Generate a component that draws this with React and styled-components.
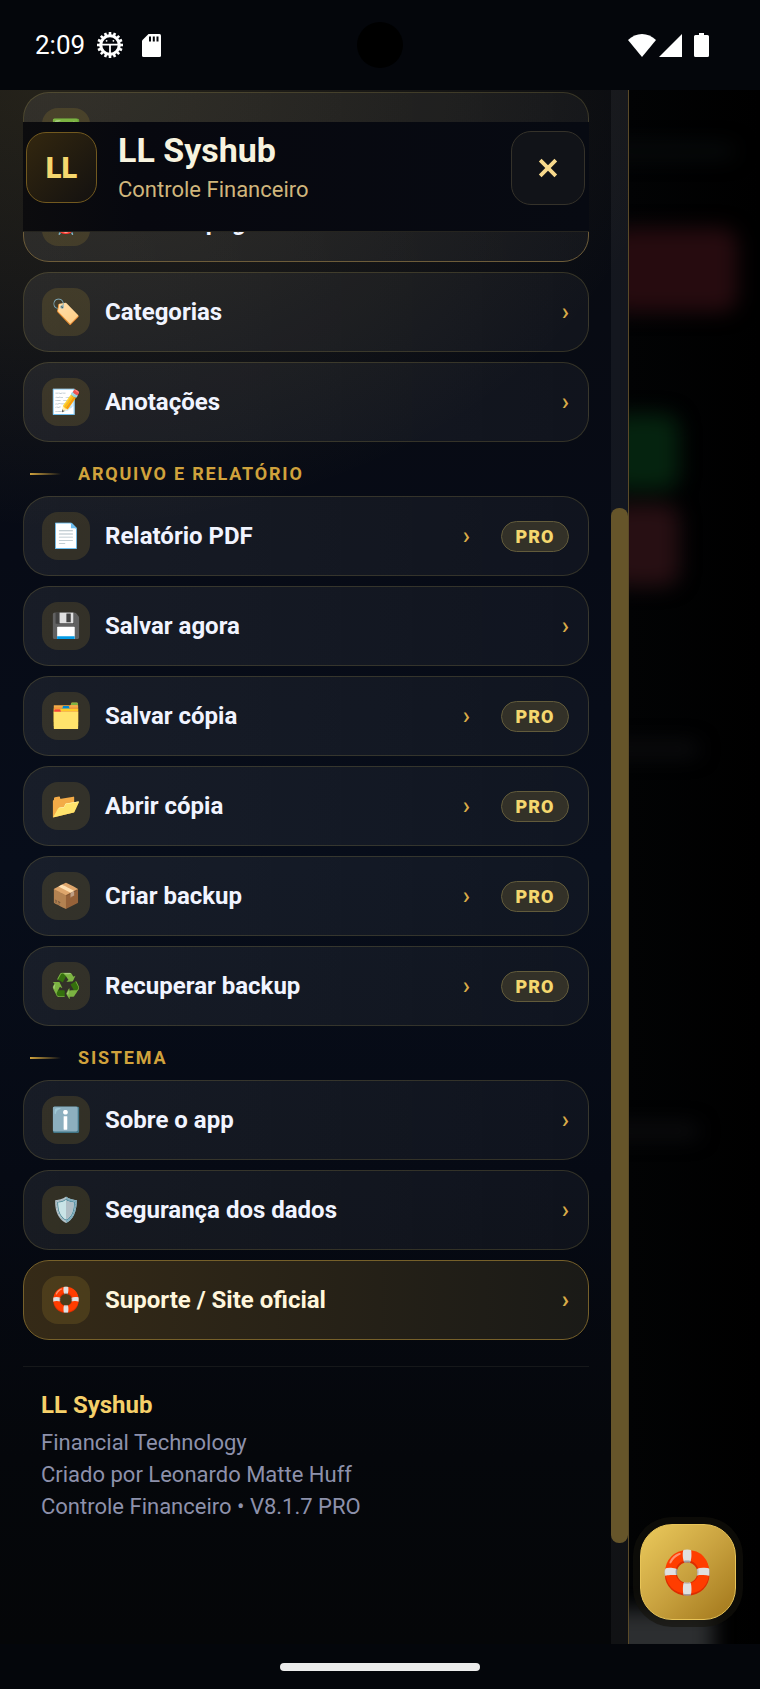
import React, { useState } from 'react';
import styled, { createGlobalStyle, css } from 'styled-components';

const GlobalStyle = createGlobalStyle`
  * {
    box-sizing: border-box;
  }
  body {
    margin: 0;
    background: #000;
    font-family: Roboto, 'Noto Color Emoji', sans-serif;
  }
  button {
    font-family: inherit;
    cursor: pointer;
  }
`;

const Page = styled.div`
  display: flex;
  flex-direction: column;
  min-height: 100vh;
  background: #000;
`;

const StatusBar = styled.header`
  position: relative;
  display: flex;
  align-items: center;
  justify-content: space-between;
  height: 90px;
  padding: 0 51px 0 35px;
  background: #04060b;
  color: #fff;
  font-size: 26px;
`;

const StatusGroup = styled.div`
  display: flex;
  align-items: center;
  gap: ${(props) => props.$gap}px;
  svg {
    display: block;
  }
`;

const Camera = styled.div`
  position: absolute;
  left: 50%;
  top: 50%;
  width: 46px;
  height: 46px;
  border-radius: 50%;
  background: #000;
  transform: translate(-50%, -50%);
`;

const Stage = styled.div`
  display: flex;
  flex: 1;
`;

const Drawer = styled.aside`
  position: relative;
  display: flex;
  flex: 0 0 629px;
  max-width: 100%;
  border-right: 1px solid #5a4a28;
  overflow: hidden;
  background: radial-gradient(
      ellipse 620px 460px at 60px -20px,
      rgba(212, 180, 90, 0.14),
      rgba(212, 180, 90, 0.08) 50%,
      transparent
    ),
    linear-gradient(180deg, #090b10 0%, #070b16 30%, #070d1a 50%, #060a14 70%, #05070b 88%, #050608 100%);
`;

const Content = styled.div`
  flex: 1;
  min-width: 0;
  padding: 2px 22px 0 23px;
`;

const Track = styled.div`
  width: 17px;
  padding-top: 418px;
  background: rgba(255, 255, 255, 0.05);
`;

const Thumb = styled.div`
  height: 1035px;
  border-radius: 8px;
  background: #66552a;
`;

const Brand = styled.div`
  position: absolute;
  z-index: 1;
  top: 32px;
  left: 23px;
  right: 39px;
  display: flex;
  align-items: flex-start;
  height: 110px;
  padding: 9px 4px 0 3px;
  border-bottom: 1px solid #25241f;
  background: linear-gradient(90deg, #0c0c0e, #07080f 20%, #070a12);
`;

const Logo = styled.div`
  display: flex;
  align-items: center;
  justify-content: center;
  width: 71px;
  height: 71px;
  margin-top: 1px;
  border: 1px solid #72591f;
  border-radius: 20px;
  background: linear-gradient(135deg, #33270f, #131110);
  color: #f5d76e;
  font-size: 29px;
  font-weight: 900;
`;

const BrandText = styled.div`
  flex: 1;
  padding-left: 21px;
`;

const BrandName = styled.h1`
  margin: 0;
  color: #f7f3df;
  font-size: 34px;
  font-weight: 700;
  line-height: 38px;
`;

const BrandSub = styled.div`
  margin-top: 7px;
  color: #d0b67c;
  font-size: 22px;
  line-height: 28px;
`;

const Close = styled.button`
  display: flex;
  align-items: center;
  justify-content: center;
  width: 74px;
  height: 74px;
  padding: 0;
  border: 1px solid #35322a;
  border-radius: 20px;
  background: #111318;
`;

const List = styled.nav`
  display: flex;
  flex-direction: column;
  gap: 10px;
`;

const featured = css`
  border-color: #76602a;
  background: linear-gradient(90deg, #352a17, #1a1a17);
  color: #fff6dc;
`;

const active = css`
  border-color: #6d5c39;
`;

const Item = styled.button`
  display: flex;
  align-items: center;
  width: 100%;
  height: 80px;
  padding: 0 19px 0 18px;
  border: 1px solid rgba(212, 190, 90, 0.18);
  border-radius: 26px;
  background: linear-gradient(90deg, rgba(255, 255, 255, 0.07), rgba(255, 255, 255, 0.04));
  color: #f1f4ff;
  font-size: 24px;
  font-weight: 700;
  text-align: left;
  ${(props) => props.$active && active}
  ${(props) => props.$featured && featured}
`;

const ItemIcon = styled.span`
  display: flex;
  align-items: center;
  justify-content: center;
  width: 48px;
  height: 48px;
  border-radius: 16px;
  background: rgba(212, 175, 55, 0.15);
  font-size: 24px;
  font-weight: 400;
`;

const ItemLabel = styled.span`
  flex: 1;
  padding-left: 15px;
`;

const Arrow = styled.span`
  color: #d9ab48;
  font-size: 24px;
  font-weight: ${(props) => (props.$bold ? 700 : 500)};
`;

const Badge = styled.span`
  display: flex;
  align-items: center;
  justify-content: center;
  width: 68px;
  height: 31px;
  margin-left: 31px;
  border: 1px solid #625b3b;
  border-radius: 16px;
  background: #333128;
  color: #f5d76e;
  font-size: 18px;
  font-weight: 900;
  letter-spacing: 1px;
`;

const SectionTitle = styled.h2`
  display: flex;
  align-items: center;
  gap: 17px;
  height: 34px;
  margin: 0 0 0 7px;
  padding-top: 9px;
  color: #d0a23c;
  font-size: 18px;
  font-weight: 700;
  letter-spacing: 0.1em;
  text-transform: uppercase;
  &::before {
    content: '';
    width: 31px;
    height: 2px;
    background: linear-gradient(90deg, #d0a23c, transparent);
  }
`;

const Footer = styled.footer`
  margin-top: 26px;
  padding: 22px 18px;
  border-top: 1px solid #16181a;
  color: #8d91ab;
  font-size: 22px;
  line-height: 32px;
  strong {
    display: block;
    margin-bottom: 6px;
    color: #f5d06a;
    font-size: 24px;
  }
`;

const Behind = styled.main`
  position: relative;
  flex: 1;
  min-width: 0;
  overflow: hidden;
  background: linear-gradient(90deg, #020304, #000);
`;

const Blurred = styled.div`
  filter: blur(10px);
`;

const Shape = styled.div`
  width: ${(props) => props.$w}px;
  height: ${(props) => props.$h}px;
  margin: ${(props) => props.$gap}px 0 0 -20px;
  border-radius: 16px;
  background: ${(props) => props.$color};
`;

const Floor = styled.div`
  position: absolute;
  left: -20px;
  bottom: -20px;
  width: 104px;
  height: 54px;
  background: #2c2e30;
  filter: blur(10px);
`;

const Support = styled.button`
  position: absolute;
  right: 24px;
  bottom: 24px;
  display: flex;
  align-items: center;
  justify-content: center;
  width: 96px;
  height: 96px;
  padding: 0;
  border: 1px solid #e8c458;
  border-radius: 32px;
  background: linear-gradient(135deg, #ebca5c, #c9a23f 50%, #a1761a);
  box-shadow: 0 0 0 7px rgba(20, 18, 12, 0.6);
  font-size: 42px;
`;

const NavBar = styled.div`
  display: flex;
  align-items: center;
  justify-content: center;
  height: 45px;
  background: #04060b;
`;

const Handle = styled.div`
  width: 200px;
  height: 8px;
  border-radius: 4px;
  background: #ececec;
`;

const top = [
  { icon: '✅', label: 'Contas a receber' },
  { icon: '⏰', label: 'Contas a pagar', active: true },
  { icon: '🏷️', label: 'Categorias' },
  { icon: '📝', label: 'Anotações' },
];

const files = [
  { icon: '📄', label: 'Relatório PDF', pro: true },
  { icon: '💾', label: 'Salvar agora' },
  { icon: '🗂️', label: 'Salvar cópia', pro: true },
  { icon: '📂', label: 'Abrir cópia', pro: true },
  { icon: '📦', label: 'Criar backup', pro: true },
  { icon: '♻️', label: 'Recuperar backup', pro: true },
];

const system = [
  { icon: 'ℹ️', label: 'Sobre o app' },
  { icon: '🛡️', label: 'Segurança dos dados' },
  { icon: '🛟', label: 'Suporte / Site oficial', featured: true },
];

const shapes = [
  { w: 126, h: 14, gap: 54, color: '#080b0c' },
  { w: 128, h: 84, gap: 70, color: '#260b0f' },
  { w: 70, h: 76, gap: 102, color: '#05230f' },
  { w: 70, h: 82, gap: 14, color: '#270f13' },
  { w: 90, h: 14, gap: 156, color: '#0d0d0f' },
  { w: 90, h: 14, gap: 368, color: '#0d0d0f' },
];

const teeth = Array.from({ length: 16 }, (_, i) => i * 22.5);

const DebugIcon = () => (
  <svg width='26' height='26' viewBox='0 0 26 26'>
    <circle cx='13' cy='13' r='9.2' fill='none' stroke='#fff' strokeWidth='3' />
    {teeth.map((a) => (
      <rect
        key={a}
        x='11.7'
        y='0'
        width='2.6'
        height='4'
        fill='#fff'
        transform={`rotate(${a} 13 13)`}
      />
    ))}
    <path d='M4 12.6h18M13 13v9' stroke='#fff' strokeWidth='1.8' />
    <circle cx='9.6' cy='8.8' r='0.9' fill='#fff' />
    <circle cx='16.4' cy='8.8' r='0.9' fill='#fff' />
  </svg>
);

const SdIcon = () => (
  <svg width='19' height='23' viewBox='0 0 19 23'>
    <path
      d='M6.5 0H17.5a1.5 1.5 0 0 1 1.5 1.5V21.5a1.5 1.5 0 0 1-1.5 1.5H1.5A1.5 1.5 0 0 1 0 21.5V6.5z'
      fill='#fff'
    />
    <path d='M8 2.5v5M11.8 2.5v5M15.5 2.5v5' stroke='#04060b' strokeWidth='2' />
  </svg>
);

const WifiIcon = () => (
  <svg width='28' height='23' viewBox='0 0 28 23'>
    <path d='M14 23L0 6C8-2 20-2 28 6z' fill='#fff' />
  </svg>
);

const SignalIcon = () => (
  <svg width='23' height='23' viewBox='0 0 23 23'>
    <path d='M23 0v23H0z' fill='#fff' />
  </svg>
);

const BatteryIcon = () => (
  <svg width='15' height='24' viewBox='0 0 15 24'>
    <path
      d='M5 0h5v2h3.5A1.5 1.5 0 0 1 15 3.5v19a1.5 1.5 0 0 1-1.5 1.5h-12A1.5 1.5 0 0 1 0 22.5v-19A1.5 1.5 0 0 1 1.5 2H5z'
      fill='#fff'
    />
  </svg>
);

const CloseIcon = () => (
  <svg width='20' height='20' viewBox='0 0 20 20'>
    <path
      d='M2.2 2.2l15.6 15.6M17.8 2.2L2.2 17.8'
      stroke='#f7d98c'
      strokeWidth='3.8'
    />
  </svg>
);

const Menu = ({ items }) =>
  items.map((item) => (
    <Item key={item.label} $active={item.active} $featured={item.featured}>
      <ItemIcon>{item.icon}</ItemIcon>
      <ItemLabel>{item.label}</ItemLabel>
      <Arrow $bold={item.featured}>›</Arrow>
      {item.pro && <Badge>PRO</Badge>}
    </Item>
  ));

const App = () => {
  const [open, setOpen] = useState(true);

  return (
    <Page>
      <GlobalStyle />
      <StatusBar>
        <StatusGroup $gap={12}>
          <span>2:09</span>
          <StatusGroup $gap={19}>
            <DebugIcon />
            <SdIcon />
          </StatusGroup>
        </StatusGroup>
        <Camera />
        <StatusGroup $gap={12}>
          <StatusGroup $gap={3}>
            <WifiIcon />
            <SignalIcon />
          </StatusGroup>
          <BatteryIcon />
        </StatusGroup>
      </StatusBar>
      <Stage>
        {open && (
          <Drawer>
            <Brand>
              <Logo>LL</Logo>
              <BrandText>
                <BrandName>LL Syshub</BrandName>
                <BrandSub>Controle Financeiro</BrandSub>
              </BrandText>
              <Close aria-label='Fechar menu' onClick={() => setOpen(false)}>
                <CloseIcon />
              </Close>
            </Brand>
            <Content>
              <List>
                <Menu items={top} />
                <SectionTitle>Arquivo e relatório</SectionTitle>
                <Menu items={files} />
                <SectionTitle>Sistema</SectionTitle>
                <Menu items={system} />
              </List>
              <Footer>
                <strong>LL Syshub</strong>
                Financial Technology
                <br />
                Criado por Leonardo Matte Huff
                <br />
                Controle Financeiro • V8.1.7 PRO
              </Footer>
            </Content>
            <Track>
              <Thumb />
            </Track>
          </Drawer>
        )}
        <Behind>
          <Blurred>
            {shapes.map((s, i) => (
              <Shape key={i} $w={s.w} $h={s.h} $gap={s.gap} $color={s.color} />
            ))}
          </Blurred>
          <Floor />
          <Support aria-label='Suporte'>🛟</Support>
        </Behind>
      </Stage>
      <NavBar>
        <Handle />
      </NavBar>
    </Page>
  );
};

export default App;
